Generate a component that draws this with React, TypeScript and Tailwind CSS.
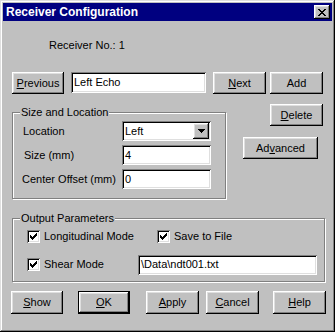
import type { ReactNode } from "react";

const raised =
  "shadow-[inset_-1px_-1px_0_#000,inset_1px_1px_0_#fff,inset_-2px_-2px_0_#808080,inset_2px_2px_0_#dfdfdf]";
const sunken =
  "shadow-[inset_1px_1px_0_#808080,inset_-1px_-1px_0_#fff,inset_2px_2px_0_#000,inset_-2px_-2px_0_#dfdfdf]";
const etched = "border border-[#808080] shadow-[inset_1px_1px_0_#fff,1px_1px_0_#fff]";

function Btn({ children, className = "" }: { children: ReactNode; className?: string }) {
  return (
    <div className={`flex h-[22px] shrink-0 items-center justify-center whitespace-nowrap bg-[#c0c0c0] text-[11px] text-black ${raised} ${className}`}>
      {children}
    </div>
  );
}

function Field({ value, className = "" }: { value: string; className?: string }) {
  return (
    <div className={`flex h-[20px] shrink-0 items-center whitespace-nowrap bg-white pl-[3px] text-[11px] text-black ${sunken} ${className}`}>
      {value}
    </div>
  );
}

function Check({ label, className = "" }: { label: string; className?: string }) {
  return (
    <div className={`flex items-center ${className}`}>
      <div className={`h-[13px] w-[13px] shrink-0 bg-white ${sunken}`}>
        <svg width="13" height="13" viewBox="0 0 13 13" shapeRendering="crispEdges">
          <rect x="9" y="3" width="1" height="1" fill="#000" />
          <rect x="8" y="4" width="2" height="1" fill="#000" />
          <rect x="3" y="5" width="1" height="1" fill="#000" />
          <rect x="7" y="5" width="3" height="1" fill="#000" />
          <rect x="3" y="6" width="2" height="1" fill="#000" />
          <rect x="6" y="6" width="3" height="1" fill="#000" />
          <rect x="3" y="7" width="5" height="1" fill="#000" />
          <rect x="4" y="8" width="3" height="1" fill="#000" />
          <rect x="5" y="9" width="1" height="1" fill="#000" />
        </svg>
      </div>
      <span className="ml-[4px] whitespace-nowrap text-[11px] text-black">{label}</span>
    </div>
  );
}

function Group({ title, className = "", children }: { title: string; className?: string; children: ReactNode }) {
  return (
    <div className={`relative shrink-0 ${etched} ${className}`}>
      <span className="absolute -top-[7px] left-[7px] whitespace-nowrap bg-[#c0c0c0] px-[1px] text-[11px] leading-[13px] text-black">
        {title}
      </span>
      {children}
    </div>
  );
}

export default function App() {
  return (
    <div className="h-[332px] w-[335px] bg-[#c0c0c0] font-['Liberation_Sans',Arial,sans-serif]">
      <div className="flex h-full w-full flex-col p-[3px] shadow-[inset_-1px_-1px_0_#000,inset_1px_1px_0_#dfdfdf,inset_-2px_-2px_0_#808080,inset_2px_2px_0_#fff]">
        {/* Title bar */}
        <div className="flex h-[18px] shrink-0 items-center justify-between bg-[#000080] pl-[3px] pr-[2px]">
          <span className="text-[12px] font-bold text-white">Receiver Configuration</span>
          <div className={`flex h-[14px] w-[16px] items-center justify-center bg-[#c0c0c0] ${raised}`}>
            <svg width="8" height="7" viewBox="0 0 8 7" shapeRendering="crispEdges">
              <rect x="0" y="0" width="2" height="1" fill="#000" />
              <rect x="6" y="0" width="2" height="1" fill="#000" />
              <rect x="1" y="1" width="2" height="1" fill="#000" />
              <rect x="5" y="1" width="2" height="1" fill="#000" />
              <rect x="2" y="2" width="4" height="1" fill="#000" />
              <rect x="3" y="3" width="2" height="1" fill="#000" />
              <rect x="2" y="4" width="4" height="1" fill="#000" />
              <rect x="1" y="5" width="2" height="1" fill="#000" />
              <rect x="5" y="5" width="2" height="1" fill="#000" />
              <rect x="0" y="6" width="2" height="1" fill="#000" />
              <rect x="6" y="6" width="2" height="1" fill="#000" />
            </svg>
          </div>
        </div>

        {/* Receiver number */}
        <div className="mt-[18px] h-[13px] pl-[46px] text-[11px] leading-[13px] text-black">Receiver No.: 1</div>

        {/* Navigation row */}
        <div className="mt-[20px] flex items-start pl-[9px]">
          <Btn className="w-[52px]"><u>P</u>revious</Btn>
          <Field value="Left Echo" className="ml-[7px] h-[21px] w-[135px]" />
          <Btn className="ml-[7px] w-[53px]"><u>N</u>ext</Btn>
          <Btn className="ml-[4px] w-[53px]">Add</Btn>
        </div>

        {/* Middle section */}
        <div className="mt-[10px] flex items-start">
          <Group title="Size and Location" className="ml-[9px] mt-[8px] h-[87px] w-[214px]">
            <div className="flex flex-col gap-[4px] pt-[8px]">
              {[
                { label: "Location", value: "Left", combo: true, pad: "pl-[10px]" },
                { label: "Size (mm)", value: "4", combo: false, pad: "pl-[11px]" },
                { label: "Center Offset (mm)", value: "0", combo: false, pad: "pl-[9px]" },
              ].map((r) => (
                <div key={r.label} className="flex h-[20px] items-center">
                  <span className={`w-[109px] shrink-0 whitespace-nowrap text-[11px] text-black ${r.pad}`}>{r.label}</span>
                  {r.combo ? (
                    <div className={`flex h-[20px] w-[89px] items-center justify-between bg-white pl-[3px] pr-[2px] text-[11px] text-black ${sunken}`}>
                      Left
                      <div className={`flex h-[16px] w-[16px] items-center justify-center bg-[#c0c0c0] ${raised}`}>
                        <svg width="7" height="4" viewBox="0 0 7 4" shapeRendering="crispEdges">
                          <rect x="0" y="0" width="7" height="1" fill="#000" />
                          <rect x="1" y="1" width="5" height="1" fill="#000" />
                          <rect x="2" y="2" width="3" height="1" fill="#000" />
                          <rect x="3" y="3" width="1" height="1" fill="#000" />
                        </svg>
                      </div>
                    </div>
                  ) : (
                    <Field value={r.value} className="h-[19px] w-[89px]" />
                  )}
                </div>
              ))}
            </div>
          </Group>
          <div className="ml-[17px] flex flex-col">
            <Btn className="ml-[27px] w-[53px]"><u>D</u>elete</Btn>
            <Btn className="mt-[11px] w-[75px]">Ad<u>v</u>anced</Btn>
          </div>
        </div>

        {/* Output parameters */}
        <Group title="Output Parameters" className="ml-[9px] mt-[19px] h-[64px] w-[313px]">
          <div className="flex pt-[9px]">
            <Check label="Longitudinal Mode" className="ml-[14px] w-[130px]" />
            <Check label="Save to File" />
          </div>
          <div className="mt-[10px] flex items-center">
            <Check label="Shear Mode" className="ml-[14px] w-[111px]" />
            <Field value="\Data\ndt001.txt" className="h-[19px] w-[179px]" />
          </div>
        </Group>

        {/* Bottom buttons */}
        <div className="mt-[9px] flex pl-[8px]">
          <Btn className="h-[23px] w-[52px]"><u>S</u>how</Btn>
          <Btn className="ml-[15px] h-[23px] w-[52px] border border-black"><u>O</u>K</Btn>
          <Btn className="ml-[16px] h-[23px] w-[53px]"><u>A</u>pply</Btn>
          <Btn className="ml-[7px] h-[23px] w-[53px]"><u>C</u>ancel</Btn>
          <Btn className="ml-[14px] h-[23px] w-[53px]"><u>H</u>elp</Btn>
        </div>
      </div>
    </div>
  );
}
